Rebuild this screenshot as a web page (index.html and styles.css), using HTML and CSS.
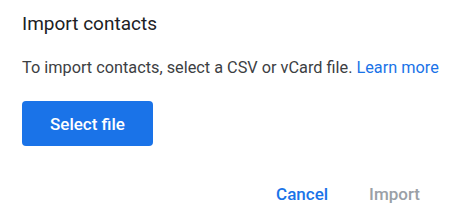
FILE: index.html
```html
<!DOCTYPE html>
<html lang="en">
<head>
  <meta charset="UTF-8" />
  <title>Import contacts</title>
  <link rel="stylesheet" href="styles.css">
</head>
<body>
  <div class="dialog">
    <h1 class="title">Import contacts</h1>
    <p class="desc">To import contacts, select a CSV or vCard file. <a href="#" class="link">Learn more</a></p>
    <button class="select-btn">Select file</button>
    <div class="actions">
      <button class="text-btn cancel">Cancel</button>
      <button class="text-btn import" disabled>Import</button>
    </div>
  </div>
</body>
</html>
```

FILE: styles.css
```css
* {
  box-sizing: border-box;
  margin: 0;
  padding: 0;
}

body {
  font-family: Roboto, "Noto Sans", Arial, sans-serif;
  background: #fff;
  color: #202124;
}

.dialog {
  width: 460px;
  height: 224px;
  padding: 12px 22px 0 22px;
}

.title {
  font-size: 19px;
  font-weight: 400;
  line-height: 24px;
}

.desc {
  margin-top: 22px;
  font-size: 16.3px;
  line-height: 20px;
  color: #3c4043;
  white-space: nowrap;
}

.link {
  color: #1a73e8;
  text-decoration: none;
}

.select-btn {
  margin-top: 23px;
  width: 131px;
  height: 45px;
  border: none;
  border-radius: 4px;
  background: #1a73e8;
  color: #fff;
  font-family: inherit;
  font-size: 17px;
  font-weight: 500;
  cursor: pointer;
}

.actions {
  display: flex;
  justify-content: flex-end;
  gap: 41px;
  margin-top: 36px;
  padding-right: 18px;
}

.text-btn {
  background: none;
  border: none;
  font-family: inherit;
  font-size: 17px;
  font-weight: 500;
  line-height: 24px;
  cursor: pointer;
}

.cancel {
  color: #1a73e8;
}

.import {
  color: #9aa0a6;
}
```
